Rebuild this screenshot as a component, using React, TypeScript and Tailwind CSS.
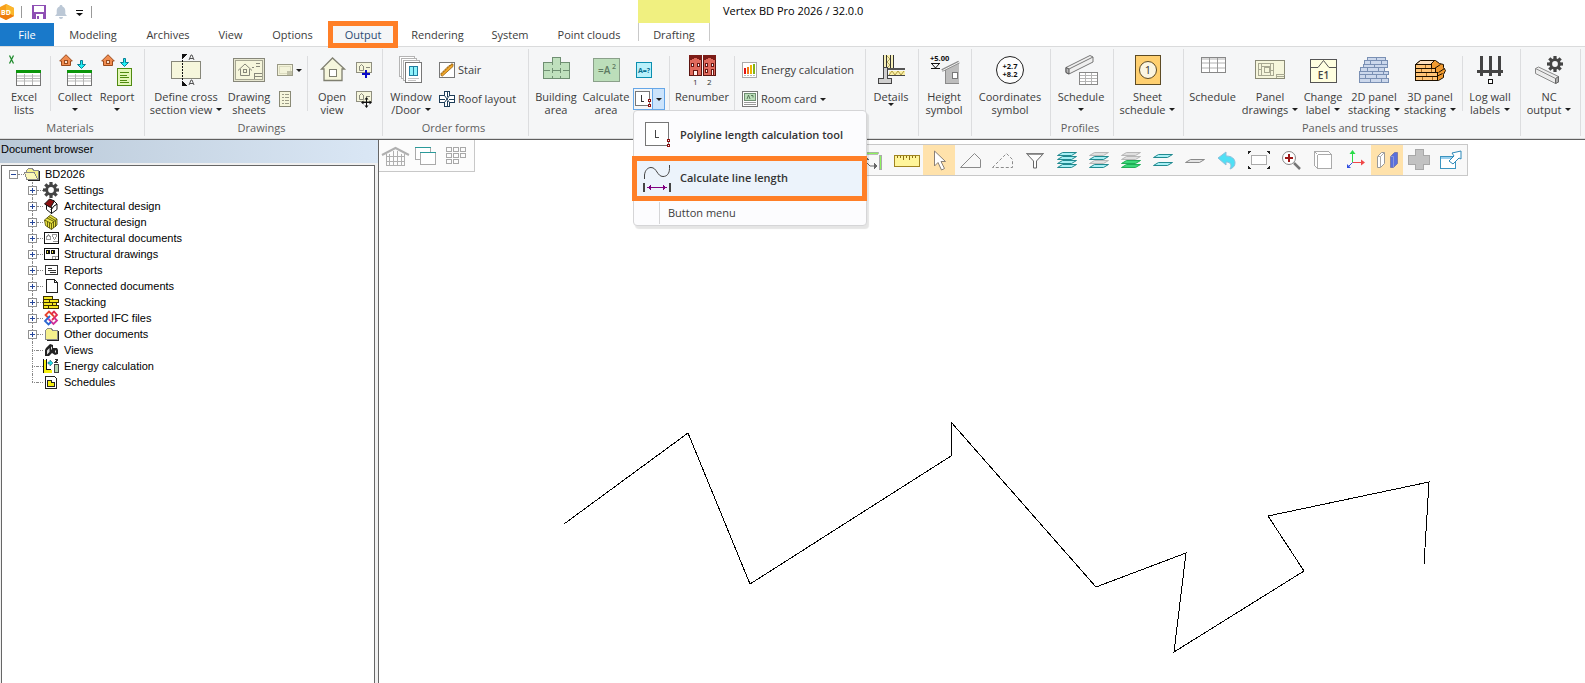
import type { ReactNode } from "react";

const UI_FONT = "font-['Open_Sans','Noto_Sans',sans-serif]";
const TREE_FONT = "font-['Liberation_Sans',Arial,sans-serif]";

function Icon({ w = 32, h = 32, smooth = false, children }: { w?: number; h?: number; smooth?: boolean; children: ReactNode }) {
  return (
    <svg
      width={w}
      height={h}
      viewBox={`0 0 ${w} ${h}`}
      fill="none"
      shapeRendering={smooth ? "auto" : "crispEdges"}
      className="block shrink-0 overflow-visible"
      aria-hidden="true"
    >
      {children}
    </svg>
  );
}

function Caret() {
  return (
    <svg width="6" height="3" viewBox="0 0 6 3" className="inline-block shrink-0" aria-hidden="true">
      <path d="M0 0h6L3 3z" fill="#1e1e1e" />
    </svg>
  );
}

/* ---------- large ribbon icons ---------- */

const House = ({ x = 0, y = 0 }: { x?: number; y?: number }) => (
  <g transform={`translate(${x} ${y})`}>
    <path d="M7 .7L13.3 7H11.500v4.500h-9V7H.7z" fill="#f08c50" stroke="#9a4a1c" shapeRendering="auto" />
    <rect x="5.500" y="6.500" width="3" height="3" fill="#f6e0d0" stroke="#9a4a1c" />
  </g>
);

const DownArrow = ({ x = 0, y = 0 }: { x?: number; y?: number }) => (
  <path
    transform={`translate(${x} ${y})`}
    d="M3.500 .5h2v4h3L4.500 8.500.5 4.500h3z"
    fill="#1ff0f5"
    stroke="#0a7f94"
    shapeRendering="auto"
  />
);

const GreenTable = () => (
  <>
    <rect x="9.500" y="16.500" width="24" height="15" fill="#fff" stroke="#777" />
    <path d="M10 21h23v2H10zM10 26h23v2H10z" fill="#dcdcdc" />
    <path d="M17.500 20v11M25.500 20v11M10 24.500h23" stroke="#b4b4b4" />
    <path d="M9 16h25v3H9z" fill="#0b960b" />
  </>
);

const ExcelIcon = () => (
  <Icon w={34}>
    <path d="M2.500 1.500l4 8M6.500 1.500l-4 8" stroke="#1f8a2c" shapeRendering="auto" strokeWidth="1.300" />
    <GreenTable />
  </Icon>
);

const CollectIcon = () => (
  <Icon w={34}>
    <House x={1} />
    <DownArrow x={19} y={6} />
    <GreenTable />
  </Icon>
);

const ReportIcon = () => (
  <Icon w={34}>
    <House x={1} />
    <DownArrow x={20} y={4} />
    <rect x="17.500" y="14.500" width="14" height="17" fill="#e3f7b8" stroke="#4f8a10" />
    <path d="M20 18.500h9M20 21.500h7M20 23.500h9M20 26.500h7M20 28.500h9" stroke="#4f8a10" />
  </Icon>
);

const SectionIcon = () => (
  <Icon>
    <rect x="1.500" y="7.500" width="29" height="17" fill="#f6f6dc" stroke="#87877a" />
    <path d="M12.500 0v32" stroke="#111" strokeDasharray="2 1" />
    <path d="M12 0h5l-5 5zM12 27v5h5z" fill="#111" />
    <path d="M19 6l2-5h1l2 5M20 4.500h3M19 31l2-5h1l2 5M20 29.500h3" stroke="#555" shapeRendering="auto" />
  </Icon>
);

const SheetsIcon = () => (
  <Icon>
    <rect x=".5" y="4.500" width="31" height="23" fill="#e6e6d0" stroke="#87877a" />
    <rect x="2.500" y="6.500" width="27" height="19" fill="#f6f6dc" stroke="#a5a592" />
    <path d="M5 16.500l7-6.500 7 6.500M7.500 15v6.500h9V15" stroke="#87877a" shapeRendering="auto" />
    <rect x="10.500" y="15.500" width="3" height="3" stroke="#87877a" />
    <path d="M21.500 25v-5.500H29M22 22.500h7M19 13.500h2M23 9.500h4M23 12.500h4" stroke="#87877a" />
  </Icon>
);

const OpenViewIcon = () => (
  <Icon>
    <path d="M16.500 4L5.500 15H8v11.500h18V15h2.500z" fill="#f6f6dc" stroke="#7f7f70" strokeWidth="1.300" shapeRendering="auto" />
    <rect x="13.500" y="15.500" width="7" height="7" fill="#fff" stroke="#7f7f70" />
  </Icon>
);

const WindowIcon = () => (
  <Icon>
    <rect x="4.500" y="2.500" width="15" height="20" fill="#fff" stroke="#b4b4b4" />
    <rect x="6.500" y="4.500" width="15" height="20" fill="#fff" stroke="#b4b4b4" />
    <rect x="8.500" y="6.500" width="16" height="20" fill="#fff" stroke="#b4b4b4" />
    <rect x="10.500" y="8.500" width="16" height="20" fill="#fff" stroke="#777" />
    <rect x="14.500" y="12.500" width="8" height="9" fill="#8ff3fb" stroke="#1f7ea0" />
    <path d="M18.500 12v10" stroke="#1f7ea0" />
    <path d="M13 24.500h11M13 26.500h8" stroke="#c4c4c4" />
  </Icon>
);

const BuildingAreaIcon = () => (
  <Icon>
    <path d="M3.500 8.500h9v-5h8v5h9v16h-26z" fill="#bfe0bd" stroke="#6f8f72" />
    <path d="M12.500 8v3M20.500 8v3M4 16.500h6M13 16.500h7M23 16.500h6M12.500 14v5M20.500 14v5M12.500 22v3M20.500 22v3" stroke="#6f8f72" />
  </Icon>
);

const CalculateAreaIcon = () => (
  <Icon>
    <rect x="3.500" y="4.500" width="26" height="23" fill="#bcdeba" stroke="#8aa08a" />
    <text x="8" y="20" fontSize="10" fontWeight="600" fill="#5f7a62" fontFamily="Open Sans">=A</text>
    <text x="22" y="15" fontSize="7" fontWeight="600" fill="#5f7a62" fontFamily="Open Sans">2</text>
  </Icon>
);

const RowHouse = ({ x, doorLeft }: { x: number; doorLeft?: boolean }) => (
  <g transform={`translate(${x} 1)`}>
    <rect x=".5" y=".5" width="12" height="20" fill="#e06a5c" stroke="#5a1410" />
    <path d="M0 0h13v5h-3V4H8V3H5v1H3v1H0z" fill="#7c1c17" />
    <path d="M2.500 8.500h2v3h-2zM8.500 8.500h2v3h-2z" fill="#dff6ff" stroke="#6b1712" />
    {doorLeft ? (
      <path d="M4.500 15.500h4v5h-4z" fill="#fff2ee" stroke="#6b1712" />
    ) : (
      <path d="M2.500 14.500h2v3h-2zM8.500 14.500h2v6h-2z" fill="#fff2ee" stroke="#6b1712" />
    )}
  </g>
);

const RenumberIcon = () => (
  <Icon>
    <RowHouse x={3} doorLeft />
    <RowHouse x={17} />
    <text x="7" y="31" fontSize="8" fill="#333" fontFamily="Open Sans">1</text>
    <text x="21" y="31" fontSize="8" fill="#333" fontFamily="Open Sans">2</text>
  </Icon>
);

const DetailsIcon = () => (
  <Icon>
    <path d="M8 1h10v13H8z" fill="#f7f0b8" />
    <path d="M8.500 1v13M11.500 1v13M15.500 1v13M18.500 1v13" stroke="#333" />
    <path d="M12 2l3 3-3 3 3 3-3 3" stroke="#b8a860" />
    <path d="M8.500 13.500h4v11h4v5h-13v-5h5z" fill="#cfcfcf" stroke="#444" />
    <path d="M13 14h17v2H13z" fill="#555" />
    <path d="M14 17h16v4H14z" fill="#f9f0a8" />
    <path d="M14 21l3-4 3 4 3-4 3 4 3-4" stroke="#b09a40" shapeRendering="auto" />
    <path d="M13 21.500h17" stroke="#444" />
  </Icon>
);

const HeightIcon = () => (
  <Icon>
    <text x="2" y="7" fontSize="7.500" fontWeight="700" fill="#111" fontFamily="Open Sans">+5.00</text>
    <path d="M3 9.500h9M3 14.500h9" stroke="#111" />
    <path d="M4 10l3.500 4L11 10" stroke="#111" shapeRendering="auto" />
    <path d="M17 15l14-7v22H17z" fill="#bdbdbd" />
    <path d="M17.500 16v13.500H31" stroke="#8a8a8a" />
    <path d="M14 16.500L31 8" stroke="#8a8a8a" strokeWidth="3" shapeRendering="auto" />
    <path d="M14.500 16.500L31 8.200" stroke="#ededed" shapeRendering="auto" />
    <rect x="24.500" y="18.500" width="5" height="6" fill="#fff" stroke="#777" />
  </Icon>
);

const CoordinatesIcon = () => (
  <Icon smooth>
    <circle cx="16" cy="16" r="13.500" fill="#fdfdfd" stroke="#222" />
    <text x="16" y="15" fontSize="7.500" fontWeight="700" textAnchor="middle" fill="#111" fontFamily="Open Sans">+2.7</text>
    <text x="16" y="23" fontSize="7.500" fontWeight="700" textAnchor="middle" fill="#111" fontFamily="Open Sans">+8.2</text>
  </Icon>
);

const BeamTableIcon = () => (
  <Icon>
    <g shapeRendering="auto">
      <path d="M1 13.500L25 1.500l3 1.500v5L4 20l-3-1.500z" fill="#efefef" stroke="#777" />
      <path d="M1 13.500L4 15v5l-3-1.500z" fill="#b8b8b8" stroke="#555" />
      <path d="M4 15L28 3" stroke="#777" />
    </g>
    <rect x="14.500" y="18.500" width="18" height="12" fill="#fff" stroke="#888" />
    <path d="M20.500 19v11M26.500 19v11M15 21.500h17M15 24.500h17M15 27.500h17" stroke="#b4b4b4" />
  </Icon>
);

const SheetScheduleIcon = () => (
  <Icon>
    <rect x="3.500" y="1.500" width="25" height="29" fill="#ffd071" stroke="#5d4b25" />
    <circle cx="16" cy="16" r="8.500" fill="#fbf5e2" stroke="#5d4b25" shapeRendering="auto" />
    <text x="16" y="20" fontSize="11" textAnchor="middle" fill="#333" fontFamily="Open Sans">1</text>
  </Icon>
);

const TableIcon = () => (
  <Icon>
    <rect x="4.500" y="3.500" width="24" height="15" fill="#fff" stroke="#888" />
    <path d="M5 4h23v2H5zM5 8h23v2H5zM5 13h23v2H5z" fill="#d8d8d8" />
    <path d="M12.500 4v14M20.500 4v14" stroke="#999" />
  </Icon>
);

const PanelIcon = () => (
  <Icon>
    <rect x="1.500" y="6.500" width="29" height="18" fill="#f6f6dc" stroke="#8a8a76" />
    <path d="M4.500 9.500h15v12h-15zM7.500 10v11M10.500 13.500h5v5h-5zM16.500 10v11M5 15.500h2M8 12.500h8M17 16.500h2M22.500 24v-3.500h8M23 22.500h7" stroke="#a8a892" />
  </Icon>
);

const ChangeLabelIcon = () => (
  <Icon>
    <rect x="3.500" y="5.500" width="26" height="23" fill="#ffffe0" stroke="#555" />
    <path d="M4 13.500h7l5.500-7 5.500 7h7" stroke="#555" shapeRendering="auto" />
    <text x="16.500" y="25" fontSize="10" fontWeight="600" textAnchor="middle" fill="#444" fontFamily="Open Sans">E1</text>
  </Icon>
);

const Stack2DIcon = () => (
  <Icon>
    <g fill="#ccd8ec" stroke="#7a90b4">
      <path d="M9.500 3.500h18v3h-18zM6.500 6.500h23v4h-23zM5.500 10.500h24v3h-24zM2.500 13.500h24v4h-24zM1.500 17.500h29v3h-29zM1.500 20.500h27v4h-27zM1.500 24.500h29v4h-29z" />
      <path d="M18.500 3v3M12.500 6v4M23.500 6v4M16.500 10v3M9.500 13v4M20.500 13v4M14.500 17v3M25.500 17v3M7.500 20v4M18.500 20v4M12.500 24v4M23.500 24v4" />
    </g>
  </Icon>
);

const Stack3DIcon = () => (
  <Icon>
    <g stroke="#1c1000">
      <path d="M1.500 10.500l5-4h15l4 3 4 1v3l2 3-2 4v3l-5 3h-23z" fill="#f09a30" shapeRendering="auto" />
      <path d="M1.500 10.500l5-4h14l-4 4z" fill="#fce0c0" shapeRendering="auto" />
      <path d="M16.500 10.500l4-4M20.500 14.500l6-4M24.500 18.500l6-4M22.500 22.500l6-3" shapeRendering="auto" />
      <path d="M1.500 10.500h16v4h-16zM1.500 14.500h20v4h-20zM1.500 18.500h22v4h-22zM1.500 22.500h22v4h-22z" fill="#ffc477" />
    </g>
    <path d="M11.500 11v3M7.500 15v3M17.500 15v3M12.500 19v3M8.500 23v3M18.500 23v3" stroke="#a86a1c" />
  </Icon>
);

const LogWallIcon = () => (
  <Icon>
    <path d="M6 2h3v20H6zM15 2h3v20h-3zM24 2h3v20h-3z" fill="#444" />
    <path d="M3 16h26v3H3z" fill="#444" />
    <rect x="14.500" y="25.500" width="4" height="4" rx="1" fill="#fff" stroke="#111" />
  </Icon>
);

const Gear = ({ cx, cy, r, hole = "#fff" }: { cx: number; cy: number; r: number; hole?: string }) => (
  <g shapeRendering="auto" transform={`translate(${cx} ${cy})`}>
    {[0, 45, 90, 135].map((a) => (
      <rect key={a} x={-r / 5} y={-r} width={(r * 2) / 5} height={r * 2} fill="#444" transform={`rotate(${a})`} />
    ))}
    <circle r={r * 0.72} fill="#444" />
    <circle r={r * 0.36} fill={hole} />
  </g>
);

const NcIcon = () => (
  <Icon>
    <Gear cx={22} cy={10} r={8} hole="#f5f6f7" />
    <g shapeRendering="auto" stroke="#8a8a8a">
      <path d="M2.500 14.500l3-1.500 20 9.500v5.500l-3 1.500-20-10z" fill="#ececec" />
      <path d="M2.500 14.500l20 10" />
      <path d="M22.500 24.500l3-2V28l-3 1.500z" fill="#aaa" stroke="#666" />
    </g>
  </Icon>
);

/* ---------- small ribbon icons ---------- */

const MiniSheetIcon = () => (
  <Icon w={16} h={16}>
    <rect x=".5" y="2.500" width="15" height="11" fill="#f3f3da" stroke="#9a9a86" />
    <rect x="2.500" y="4.500" width="11" height="7" stroke="#dcdcc0" />
    <path d="M10 9h5v4h-5z" fill="#c0c0a8" />
  </Icon>
);

const MiniListIcon = () => (
  <Icon w={16} h={16}>
    <rect x="2.500" y=".5" width="11" height="15" fill="#f6f6dc" stroke="#8a8a76" />
    <path d="M5 3.500h2M8 3.500h4M5 6.500h2M8 6.500h4M5 9.500h2M8 9.500h4M5 12.500h2M8 12.500h4" stroke="#9c9c88" />
  </Icon>
);

const MiniView = () => (
  <>
    <rect x=".5" y=".5" width="15" height="10" fill="#f6f6dc" stroke="#8f8f80" />
    <path d="M3 5l2.500-2.500L8 5M3.500 5v3.500h4V5M10 5.500h4" stroke="#8a8a7c" shapeRendering="auto" />
  </>
);

const ViewAddIcon = () => (
  <Icon w={16} h={16}>
    <MiniView />
    <path d="M9 8v8h2V8zM6 11v2h8v-2z" fill="#0a0ac8" />
  </Icon>
);

const ViewMoveIcon = () => (
  <Icon w={16} h={16}>
    <MiniView />
    <path d="M10.500 8v7M7 11.500h7" stroke="#111" />
    <path d="M10.500 6l2 2.500h-4zM10.500 17l2-2.500h-4zM5 11.500l2.500-2v4zM16 11.500l-2.500-2v4z" fill="#111" shapeRendering="auto" />
  </Icon>
);

const StairIcon = () => (
  <Icon w={16} h={16}>
    <rect x=".5" y=".5" width="15" height="15" fill="#fff" stroke="#777" />
    <path
      d="M2 13.500v-2.500h2V9h2V7h2V5h2V3.500h2V2h2v2.500L3.500 14z"
      fill="#f4a92c"
      stroke="#96600c"
      strokeWidth=".8"
      shapeRendering="auto"
    />
  </Icon>
);

const RoofIcon = () => (
  <Icon w={16} h={16}>
    <path d="M5.500.5h5v4h5v7h-5v4h-5v-4h-5v-7h5z" fill="#fff" stroke="#1d3d58" />
    <path d="M8 1v5M8 10v5M1 8h5M10 8h5" stroke="#1d3d58" />
    <path d="M5.500 4.500l5 7M10.500 4.500l-5 7" stroke="#1d3d58" shapeRendering="auto" />
  </Icon>
);

const AskAreaIcon = () => (
  <Icon w={16} h={16}>
    <rect x=".5" y=".5" width="15" height="15" fill="#b9f1fb" stroke="#0a8fb0" />
    <text x="8" y="11" fontSize="7" fontWeight="700" textAnchor="middle" fill="#0a6f90" fontFamily="Open Sans">A=?</text>
  </Icon>
);

const PolylineMiniIcon = () => (
  <Icon w={16} h={16}>
    <rect x=".5" y=".5" width="14" height="14" fill="#fff" stroke="#777" />
    <path d="M6.500 4v6H9" stroke="#333" />
    <path d="M13.500 8.500h2v2h-2zM13.500 13.500h2v2h-2z" fill="#fff" stroke="#8b0f0f" />
  </Icon>
);

const EnergyIcon = () => (
  <Icon w={16} h={16}>
    <rect x=".5" y=".5" width="14" height="15" fill="#fff" stroke="#aaa" />
    <path d="M2 6h2v6H2z" fill="#e41414" />
    <path d="M5 5h2v7H5z" fill="#f07814" />
    <path d="M8 3h2v9H8z" fill="#f0b400" />
    <path d="M11 2h2v10h-2z" fill="#82b414" />
    <path d="M2 13.500h11" stroke="#bbb" strokeDasharray="2 1" />
  </Icon>
);

const RoomCardIcon = () => (
  <Icon w={16} h={16}>
    <rect x=".5" y=".5" width="15" height="15" fill="#fff" stroke="#777" />
    <rect x="2.500" y="2.500" width="11" height="7" fill="#bcdeba" stroke="#6f8f72" />
    <path d="M5 8l1.500-4L8 8M9 4.500h2v2" stroke="#4f6f52" strokeWidth=".9" shapeRendering="auto" />
    <path d="M2 11.500h12M2 13.500h12" stroke="#999" />
  </Icon>
);

/* ---------- ribbon building blocks ---------- */

function BigButton({ icon, lines, caret, width }: { icon: ReactNode; lines: string[]; caret?: "inline" | "below" | "tight"; width: string }) {
  return (
    <button type="button" className={`flex shrink-0 flex-col items-center ${width}`}>
      {icon}
      <span className="mt-1 flex flex-col items-center whitespace-nowrap leading-[13px]">
        {lines.map((line, i) => (
          <span key={line} className="flex items-center gap-1">
            {line}
            {caret === "inline" && i === lines.length - 1 && <Caret />}
          </span>
        ))}
        {caret === "below" && <span className="flex h-3 items-center"><Caret /></span>}
        {caret === "tight" && <span className="flex h-1 items-start"><Caret /></span>}
      </span>
    </button>
  );
}

function SmallButton({ icon, label, caret, name }: { icon: ReactNode; label?: string; caret?: boolean; name?: string }) {
  return (
    <button type="button" aria-label={name} className="flex h-4 items-center gap-[3px] whitespace-nowrap">
      {icon}
      {label}
      {caret && <Caret />}
    </button>
  );
}

const SmallStack = ({ children, className = "" }: { children: ReactNode; className?: string }) => (
  <div className={`flex shrink-0 flex-col gap-[13px] pt-2 ${className}`}>{children}</div>
);

const Divider = ({ className = "" }: { className?: string }) => (
  <div className={`mt-0.5 h-[55px] w-px shrink-0 bg-[#dcdddf] ${className}`} />
);

function Group({ title, width, children }: { title?: string; width: string; children: ReactNode }) {
  return (
    <section className={`flex shrink-0 flex-col border-r border-[#dcdddf] pt-[5px] ${width}`}>
      <div className="flex h-[67px]">{children}</div>
      <div className="pr-1 text-center leading-[16px] text-[#5e5e5e]">{title}</div>
    </section>
  );
}

const PolylineIcon = () => (
  <Icon w={28} h={28}>
    <rect x="1.500" y="1.500" width="23" height="23" fill="#fff" stroke="#777" />
    <path d="M11.500 9v7H15" stroke="#444" />
    <path d="M23.500 18.500h2v2h-2zM23.500 23.500h2v2h-2z" fill="#fff" stroke="#8b0f0f" />
  </Icon>
);

const LineLengthIcon = () => (
  <Icon w={28} h={28}>
    <path d="M1.500 14v-4C2 5 5 2.500 8 2.500c6 0 6 9 12 9 4 0 6.500-3 6.500-8V0" stroke="#444" shapeRendering="auto" />
    <path d="M0 18h2v9H0zM26 18h2v9h-2z" fill="#444" />
    <path d="M5 22.500h18" stroke="#800080" />
    <path d="M4 22.500l4-2.500v5zM24 22.500L20 20v5z" fill="#800080" />
  </Icon>
);

function LengthMenu() {
  return (
    <div className="w-[234px] rounded-sm border border-[#d5d5d7] bg-[#fcfcfe] shadow-[2px_3px_1px_rgba(0,0,0,0.1)]">
      <button type="button" className="flex h-[45px] w-full items-center gap-2 pl-[10px] pt-[3px] font-semibold text-[#333]">
        <PolylineIcon />
        Polyline length calculation tool
      </button>
      <button
        type="button"
        className="-mx-[2px] flex h-[45px] w-[235px] items-center gap-[9px] border-[5px] border-[#ff7f27] bg-[#ecf3fb] pl-[6px] font-semibold text-[#333]"
      >
        <LineLengthIcon />
        Calculate line length
      </button>
      <button type="button" className="flex h-6 w-full items-center">
        <span className="h-[22px] w-[26px] border-r border-[#d5d5d7]" />
        <span className="pl-2">Button menu</span>
      </button>
    </div>
  );
}

function Ribbon() {
  return (
    <div className="flex h-[93px] border-y border-[#dadbdc] bg-[#f5f6f7] py-[2px]">
      <Group title="Materials" width="w-[145px]">
        <BigButton width="w-[48px]" icon={<ExcelIcon />} lines={["Excel", "lists"]} />
        <Divider className="ml-[2px] mr-[3px]" />
        <BigButton width="w-[42px]" icon={<CollectIcon />} lines={["Collect"]} caret="below" />
        <BigButton width="w-[42px]" icon={<ReportIcon />} lines={["Report"]} caret="below" />
      </Group>
      <Group title="Drawings" width="w-[238px]">
        <BigButton width="w-[82px]" icon={<SectionIcon />} lines={["Define cross", "section view"]} caret="inline" />
        <BigButton width="w-[44px]" icon={<SheetsIcon />} lines={["Drawing", "sheets"]} />
        <SmallStack className="w-[36px] pl-[6px]">
          <SmallButton icon={<MiniSheetIcon />} caret name="Sheet layout" />
          <SmallButton icon={<MiniListIcon />} name="Sheet list" />
        </SmallStack>
        <Divider />
        <BigButton width="w-[48px]" icon={<OpenViewIcon />} lines={["Open", "view"]} />
        <SmallStack>
          <SmallButton icon={<ViewAddIcon />} name="Add view" />
          <SmallButton icon={<ViewMoveIcon />} name="Move view" />
        </SmallStack>
      </Group>
      <Group title="Order forms" width="w-[146px]">
        <BigButton width="w-[56px]" icon={<WindowIcon />} lines={["Window", "/Door"]} caret="inline" />
        <SmallStack>
          <SmallButton icon={<StairIcon />} label="Stair" />
          <SmallButton icon={<RoofIcon />} label="Roof layout" />
        </SmallStack>
      </Group>
      <Group width="w-[337px]">
        <BigButton width="w-[54px]" icon={<BuildingAreaIcon />} lines={["Building", "area"]} />
        <BigButton width="w-[46px]" icon={<CalculateAreaIcon />} lines={["Calculate", "area"]} />
        <div className="flex w-[40px] shrink-0 flex-col pl-1 pt-2">
          <span className="pl-[3px]"><SmallButton icon={<AskAreaIcon />} name="Query area" /></span>
          <div className="relative mt-[10px] flex h-[22px] w-8 border border-[#66a7e8]">
            <button type="button" aria-label="Polyline length" className="flex w-[18px] items-center justify-center">
              <PolylineMiniIcon />
            </button>
            <button type="button" aria-label="Length tools" aria-expanded="true" className="flex flex-1 items-center justify-center border-l border-[#66a7e8] bg-[#cce4fc]">
              <Caret />
            </button>
            <div className="absolute -left-px top-full z-20 pt-px">
              <LengthMenu />
            </div>
          </div>
        </div>
        <Divider />
        <BigButton width="w-[64px]" icon={<RenumberIcon />} lines={["Renumber"]} />
        <Divider />
        <SmallStack className="pl-[7px]">
          <SmallButton icon={<EnergyIcon />} label="Energy calculation" />
          <SmallButton icon={<RoomCardIcon />} label="Room card" caret />
        </SmallStack>
      </Group>
      <Group width="w-[53px]">
        <BigButton width="w-[50px]" icon={<DetailsIcon />} lines={["Details"]} caret="tight" />
      </Group>
      <Group width="w-[53px]">
        <BigButton width="w-[50px]" icon={<HeightIcon />} lines={["Height", "symbol"]} />
      </Group>
      <Group width="w-[79px]">
        <BigButton width="w-[76px]" icon={<CoordinatesIcon />} lines={["Coordinates", "symbol"]} />
      </Group>
      <Group title="Profiles" width="w-[63px]">
        <BigButton width="w-[60px]" icon={<BeamTableIcon />} lines={["Schedule"]} caret="below" />
      </Group>
      <Group width="w-[70px]">
        <BigButton width="w-[67px]" icon={<SheetScheduleIcon />} lines={["Sheet", "schedule"]} caret="inline" />
      </Group>
      <Group title="Panels and trusses" width="w-[337px]">
        <BigButton width="w-[57px]" icon={<TableIcon />} lines={["Schedule"]} />
        <BigButton width="w-[58px]" icon={<PanelIcon />} lines={["Panel", "drawings"]} caret="inline" />
        <BigButton width="w-[48px]" icon={<ChangeLabelIcon />} lines={["Change", "label"]} caret="inline" />
        <BigButton width="w-[54px]" icon={<Stack2DIcon />} lines={["2D panel", "stacking"]} caret="inline" />
        <BigButton width="w-[58px]" icon={<Stack3DIcon />} lines={["3D panel", "stacking"]} caret="inline" />
        <Divider className="ml-[3px]" />
        <BigButton width="w-[54px]" icon={<LogWallIcon />} lines={["Log wall", "labels"]} caret="inline" />
      </Group>
      <Group width="w-[60px]">
        <BigButton width="w-[56px]" icon={<NcIcon />} lines={["NC", "output"]} caret="inline" />
      </Group>
    </div>
  );
}

/* ---------- title bar and tabs ---------- */

function TitleBar() {
  return (
    <header className="flex h-[23px] items-center bg-white text-black">
      <Icon w={14} h={16} smooth>
        <path d="M6 0l8 4v8l-8 4-8-4V4z" fill="#f7a01c" />
        <path d="M6 0l8 4v8l-8-4z" fill="#fbb62c" />
        <path d="M-2 12l8-4 8 4-8 4z" fill="#ee7d10" />
        <text x="6" y="11" fontSize="7" fontWeight="700" textAnchor="middle" fill="#fff" fontFamily="Open Sans">BD</text>
      </Icon>
      <div className="ml-[7px] h-3 w-px bg-[#999]" />
      <button type="button" aria-label="Save" className="ml-[10px]">
        <Icon w={14} h={14}>
          <path d="M0 0h14v14H0z" fill="#8e4fb4" />
          <path d="M2 1h10v6H2zM4 9h7v5H4z" fill="#fff" />
          <path d="M5 11h2v3H5z" fill="#8e4fb4" />
        </Icon>
      </button>
      <button type="button" aria-label="Notifications" className="ml-[9px]">
        <Icon w={12} h={14} smooth>
          <path d="M6 0c1 0 1.500.6 1.500 1.500C9.500 2.200 10.300 4 10.300 6v3L12 11H0l1.700-2V6c0-2 .8-3.800 2.800-4.500C4.500.6 5 0 6 0zM4 12h4c0 1.200-.8 2-2 2s-2-.8-2-2z" fill="#bcc8d6" />
        </Icon>
      </button>
      <button type="button" aria-label="Customize toolbar" className="ml-[9px] mt-[3px]">
        <Icon w={7} h={6}>
          <path d="M0 .5h7" stroke="#111" />
          <path d="M0 3h7L3.500 6z" fill="#111" shapeRendering="auto" />
        </Icon>
      </button>
      <div className="ml-2 h-3 w-px bg-[#999]" />
      <div className="ml-[546px] h-full w-[72px] bg-[#f0f080]" />
      <h1 className="ml-[13px] whitespace-nowrap">Vertex BD Pro 2026 / 32.0.0</h1>
    </header>
  );
}

const TABS = [
  { label: "File", cls: "h-[23px] w-[54px] bg-[#1979ca] pt-px text-white" },
  { label: "Modeling", cls: "h-[23px] w-[78px] pt-px" },
  { label: "Archives", cls: "h-[23px] w-[72px] pt-px" },
  { label: "View", cls: "h-[23px] w-[53px] pt-px" },
  { label: "Options", cls: "h-[23px] w-[71px] pt-px" },
  { label: "Output", cls: "relative z-10 -mt-[2px] h-[27px] w-[70px] border-[5px] border-[#ff7f27] bg-[#f5f6f7] pt-px text-[#2b4a72]" },
  { label: "Rendering", cls: "h-[23px] w-[79px] pt-px" },
  { label: "System", cls: "h-[23px] w-[66px] pt-px" },
  { label: "Point clouds", cls: "h-[23px] w-[92px] pt-px" },
  { label: "Drafting", cls: "ml-[3px] h-[18px] w-[72px] border-x border-[#c9c9c9] pt-[6px]" },
];

function Tabs() {
  return (
    <nav className="flex h-[23px] items-start bg-white">
      {TABS.map((t) => (
        <button key={t.label} type="button" className={`flex shrink-0 items-center justify-center whitespace-nowrap ${t.cls}`}>
          {t.label}
        </button>
      ))}
    </nav>
  );
}

/* ---------- document browser ---------- */

const FolderIcon = ({ open = false }: { open?: boolean }) => (
  <Icon w={16} h={16}>
    <path d="M2.500 13.500v-9l2-2h4l1 2h5v9z" fill="#f5f08c" stroke="#8a8a8a" />
    {open && <path d="M3 13.500L.5 6.500h10l3 7z" fill="#fbf7b8" stroke="#8a8a8a" />}
    <path d="M4 14.500h11.500V5" stroke="#222" />
  </Icon>
);

const TREE: { label: string; leaf?: boolean; icon: ReactNode }[] = [
  { label: "Settings", icon: <Gear cx={8} cy={8} r={8} /> },
  {
    label: "Architectural design",
    icon: (
      <g shapeRendering="auto" stroke="#111">
        <path d="M3.500 7v4.500l5 4V9zM8.500 9v6.500l5.500-4V6z" fill="#fff" />
        <path d="M9 9l-1 3 3-4 3-2-4-4" fill="#fff" />
        <path d="M1.500 6l5-5 5 2-4 6.500z" fill="#8b1010" />
      </g>
    ),
  },
  {
    label: "Structural design",
    icon: (
      <g shapeRendering="auto" stroke="#4a4600" strokeWidth=".8">
        <path d="M1.500 6l6-5 6.500 4v6l-5.500 4.500-6-4z" fill="#e8e040" />
        <path d="M1.500 6l7 3.500L14 5M8.500 9.500v6M4 4l7 3.500M5.500 2.500l7 4M4.500 8v5M6.500 9v5M10.500 8v6M12.500 7v6" />
      </g>
    ),
  },
  {
    label: "Architectural documents",
    icon: (
      <>
        <rect x="1.500" y="2.500" width="14" height="11" fill="#fff" stroke="#111" />
        <path d="M3.500 7l2-2 2 2v2.500h-4zM9.500 4.500h4v2l-2 3-2-3zM10 11.500h5" stroke="#999" />
      </>
    ),
  },
  {
    label: "Structural drawings",
    icon: (
      <>
        <rect x="1.500" y="2.500" width="14" height="11" fill="#fff" stroke="#111" />
        <path d="M3 4h4v4H3zM8 4h4v4H8z" fill="#111" />
        <path d="M4 5h1v2H4zM6 5h0M9 5h1v2H9z" fill="#e8e040" />
        <path d="M9.500 13v-2.500H15M12.500 11v2" stroke="#999" />
      </>
    ),
  },
  {
    label: "Reports",
    icon: (
      <>
        <rect x="2.500" y="3.500" width="12" height="9" fill="#fff" stroke="#333" />
        <path d="M5 6.500h4M5 8.500h8M7 10.500h6" stroke="#333" />
      </>
    ),
  },
  { label: "Connected documents", icon: <path d="M3.500 1.500h8l3 3v10h-11zM11.500 1.500v3h3" fill="#fff" stroke="#222" /> },
  {
    label: "Stacking",
    icon: (
      <path
        d="M.5 2.500h9v3h-9zM.5 5.500h15v3H.5zM.5 8.500h13v3H.5zM.5 11.500h15v3H.5zM6.500 6v2M9.500 9v2M5.500 12v2"
        fill="#f5e620"
        stroke="#3a3000"
      />
    ),
  },
  {
    label: "Exported IFC files",
    icon: (
      <g shapeRendering="auto" strokeWidth="1.800">
        <path d="M5 7.500L2.500 5 6 1.500 11 6.500" stroke="#e8442e" />
        <path d="M8.500 4L11 1.500 14 5 9 10" stroke="#e02c50" />
        <path d="M11.500 8L14 10.500 10.500 14 5.500 9" stroke="#d0309a" />
        <path d="M8 12l-2.500 2.500L2 11l5-5" stroke="#2a66d0" />
      </g>
    ),
  },
  { label: "Other documents", icon: <FolderIcon /> },
  {
    label: "Views",
    leaf: true,
    icon: (
      <g shapeRendering="auto">
        <path d="M3 6l4-4 3 1v3l4 0 1 2v4l-3 1-3-2-3 3H2V8z" fill="#222" />
        <path d="M4 8.500l2.500-2.500v4L4 12.500zM8 4.500l1 .5v2l-1 1zM12 8l1 1v2l-1-1z" fill="#ddd" />
      </g>
    ),
  },
  {
    label: "Energy calculation",
    leaf: true,
    icon: (
      <>
        <path d="M0 2h4v10h5v3H0z" fill="#f5ee10" />
        <path d="M.5 1v14M3.500 1v10.500H8" stroke="#111" />
        <path d="M5 4h2V2l3 3-3 3V6H5z" fill="#20e0e8" stroke="#0a5060" strokeWidth=".5" shapeRendering="auto" />
        <rect x="11.500" y="6.500" width="4" height="8" fill="#b8d8b0" stroke="#444" />
        <path d="M12 1.500h2v1l-2 2h3" stroke="#333" />
      </>
    ),
  },
  {
    label: "Schedules",
    leaf: true,
    icon: (
      <>
        <path d="M2.500 2.500h9l2 2v10h-11z" fill="#fff" stroke="#222" />
        <path d="M4.500 6.500h4v2h3v4h-7z" fill="#f5ee10" stroke="#222" />
      </>
    ),
  },
];

const Expander = ({ open = false }: { open?: boolean }) => (
  <Icon w={9} h={9}>
    <rect x=".5" y=".5" width="8" height="8" fill="#fff" stroke="#919191" />
    <path d={open ? "M2 4.500h5" : "M2 4.500h5M4.500 2v5"} stroke="#26479b" />
  </Icon>
);

function DocumentBrowser() {
  return (
    <aside className="flex w-[379px] shrink-0 flex-col border-r border-[#666] bg-[#f0f0f0]">
      <h2 className="h-[23px] bg-linear-to-r from-[#bac9d8] to-[#dae7f5] pl-[1px] leading-[18px] text-black">Document browser</h2>
      <div className="ml-[1px] mr-[3px] mt-[2px] flex-1 border border-b-0 border-[#666] bg-white leading-4 text-black">
        <ul>
          <li>
            <div className="flex h-4 items-center pl-[7px]">
              <Expander open />
              <span className="w-[6px] border-t border-dotted border-[#888]" />
              <FolderIcon open />
              <span className="pl-[5px]">BD2026</span>
            </div>
            <ul>
              {TREE.map((n, i) => (
                <li key={n.label} className="flex h-4 items-center pl-[26px]">
                  <span className="relative flex h-4 w-[9px] items-center">
                    <span className={`absolute left-1 top-0 border-l border-dotted border-[#888] ${i === TREE.length - 1 ? "h-2" : "h-4"}`} />
                    {n.leaf ? (
                      <span className="ml-1 w-[5px] border-t border-dotted border-[#888]" />
                    ) : (
                      <span className="relative"><Expander /></span>
                    )}
                  </span>
                  <span className="w-[6px] border-t border-dotted border-[#888]" />
                  <Icon w={16} h={16}>{n.icon}</Icon>
                  <span className="whitespace-nowrap pl-[5px]">{n.label}</span>
                </li>
              ))}
            </ul>
          </li>
        </ul>
      </div>
    </aside>
  );
}

/* ---------- drawing area ---------- */

const layer = (y: number, fill: string, stroke: string) => (
  <path key={y} d={`M6.500 ${y}.5h14l-5 3h-14z`} fill={fill} stroke={stroke} shapeRendering="auto" />
);
const CYAN = ["#a8f0f5", "#218a90"] as const;
const GREY = ["#e0e0e0", "#b8b8b8"] as const;
const GREEN = ["#3cd878", "#1fae56"] as const;

const VIEW_TOOLS: { name: string; active?: boolean; icon: ReactNode }[] = [
  {
    name: "Rotate view",
    icon: (
      <>
        <path d="M0 3h14v2H0z" fill="#8ef25e" stroke="#aaa" strokeWidth=".8" />
        <path d="M15.500 6.500h2v14h-2z" fill="#8ef25e" stroke="#aaa" />
        <path d="M2 8v5l4 4h5" stroke="#666" shapeRendering="auto" />
        <path d="M10 14l4 3-4 3zM-1 11l3-4 3 4z" fill="#666" />
      </>
    ),
  },
  {
    name: "Measure",
    icon: (
      <>
        <rect x="-1.500" y="6.500" width="25" height="11" fill="#fff59a" stroke="#a08420" />
        <path d="M1.500 7v2M4.500 7v2M7.500 7v4M10.500 7v2M13.500 7v4M16.500 7v2M19.500 7v2" stroke="#8a6f14" />
      </>
    ),
  },
  {
    name: "Select",
    active: true,
    icon: <path d="M6.500 2v15l3.500-3.500 3.500 7.500 3-1.500-3.500-7h4.500z" fill="#fff" stroke="#8a8076" shapeRendering="auto" />,
  },
  { name: "Select polygon", icon: <path d="M.5 18.500L14.500 4.500l6 6v8z" stroke="#8a8a8a" shapeRendering="auto" /> },
  {
    name: "Select open polygon",
    icon: <path d="M.5 18.500L14.500 4.500l6 6v8z" stroke="#8a8a8a" strokeDasharray="3 2" shapeRendering="auto" />,
  },
  {
    name: "Filter",
    icon: (
      <g shapeRendering="auto">
        <path d="M2.500 4.500h17l-7 7.500v7h-3v-7z" fill="#fff" stroke="#666" />
        <path d="M3 4.500h16l-1 1.500H4z" fill="#999" />
      </g>
    ),
  },
  { name: "All layers", icon: [15, 11, 7, 3].map((y) => layer(y, ...CYAN)) },
  { name: "Active layers", icon: <>{layer(15, ...CYAN)}{layer(11, ...GREY)}{layer(7, ...CYAN)}{layer(3, ...GREY)}</> },
  { name: "Bottom layers", icon: <>{layer(15, ...GREEN)}{layer(11, ...GREEN)}{layer(7, ...GREY)}{layer(3, ...GREY)}</> },
  { name: "Two layers", icon: <>{layer(13, ...CYAN)}{layer(5, ...CYAN)}</> },
  { name: "Single layer", icon: layer(10, "#e4e4e4", "#8a8a8a") },
  {
    name: "Undo",
    icon: <path d="M2 9l8-6v4c6 0 9 3 9 7 0 3-2 5-5 6 2-4 1-7-4-7v3z" fill="#4fe0f5" stroke="#8cc0dc" shapeRendering="auto" />,
  },
  {
    name: "Zoom extents",
    icon: (
      <>
        <rect x="3.500" y="6.500" width="15" height="9" fill="#fff" stroke="#aaa" />
        <path d="M.5 5V2.500H3M19 2.500h2.500V5M21.500 17v2.500H19M3 19.500H.5V17" stroke="#222" />
        <path d="M0 2h2v2H0zM20 2h2v2h-2zM20 18h2v2h-2zM0 18h2v2H0z" fill="#222" />
      </>
    ),
  },
  {
    name: "Zoom in",
    icon: (
      <g shapeRendering="auto">
        <path d="M14 14l6 6" stroke="#777" strokeWidth="2.500" />
        <circle cx="9" cy="9" r="6.500" fill="#fff" stroke="#888" />
        <path d="M8 5h2v3h3v2h-3v3H8v-3H5V8h3z" fill="#9c1616" />
      </g>
    ),
  },
  {
    name: "3D box",
    icon: (
      <>
        <path d="M2.500 2.500h14l3 3v14h-14l-3-3z" fill="#fff" stroke="#aaa" />
        <path d="M5.500 5.500h14M5.500 5.500v14M2.500 2.500l3 3" stroke="#aaa" />
      </>
    ),
  },
  {
    name: "Coordinate axes",
    icon: (
      <g shapeRendering="auto">
        <path d="M8.500 13.500V4" stroke="#28dc46" />
        <path d="M8.500 1l3 4h-6z" fill="#28dc46" />
        <path d="M8.500 13.500H18" stroke="#f04848" />
        <path d="M21 13.500l-4-3v6z" fill="#f04848" />
        <path d="M8.500 13.500L5 17" stroke="#3250e0" />
        <path d="M3 19v-4l4 4z" fill="#3250e0" />
      </g>
    ),
  },
  {
    name: "Panel sides",
    active: true,
    icon: (
      <g shapeRendering="auto">
        <path d="M1.500 7.500l4-4h3v11l-4 4h-3z" fill="#fff" stroke="#999" />
        <path d="M1.500 7.500h3v11M4.500 7.500l4-4" stroke="#aaa" />
        <path d="M14.500 7.500l4-4h3v11l-4 4h-3z" fill="#5a70dc" stroke="#7c7ca8" />
        <path d="M14.500 7.500h3v11" stroke="#8c98d8" />
      </g>
    ),
  },
  { name: "Add", icon: <path d="M7.500.5h8v6h6v9h-6v5h-8v-5h-7v-9h7z" fill="#c2c2c2" stroke="#a8a8a8" /> },
  {
    name: "Open in window",
    icon: (
      <>
        <rect x=".5" y="7.500" width="15" height="12" fill="#fff" stroke="#3c94c0" />
        <path d="M1 8h14v2H1z" fill="#9ad0ee" />
        <path d="M9 12l5-5-2-3 9-2v8l-2-1-6 6z" fill="#fff" stroke="#2c88b8" shapeRendering="auto" />
      </>
    ),
  },
];

const HOUSE_TOOLS: { name: string; icon: ReactNode }[] = [
  {
    name: "Building",
    icon: (
      <g stroke="#b0b0b0">
        <path d="M-2 10L11.500 3 25 10" strokeWidth="2" shapeRendering="auto" />
        <path d="M2.500 9v11.500h18V9M5.500 9v11M9.500 6v14M13.500 6v14M17.500 9v11M3 11.500h17M3 16.500h17" />
      </g>
    ),
  },
  {
    name: "Windows",
    icon: (
      <>
        <rect x=".5" y="2.500" width="15" height="12" fill="#fff" stroke="#aaa" />
        <path d="M0 2h16v1H0z" fill="#2a9a9a" />
        <rect x="5.500" y="7.500" width="15" height="12" fill="#fff" stroke="#aaa" />
        <path d="M5 7h16v1H5z" fill="#2a9a9a" />
      </>
    ),
  },
  {
    name: "Tiles",
    icon: <path d="M.5 2.500h5v4h-5zM7.500 2.500h5v4h-5zM14.500 2.500h5v4h-5zM.5 8.500h5v4h-5zM7.500 8.500h5v4h-5zM14.500 8.500h5v4h-5zM.5 14.500h5v4h-5zM7.500 14.500h5v4h-5z" stroke="#a8a8a8" />,
  },
];

function DrawingArea() {
  return (
    <main className="relative flex flex-1 items-start bg-white">
      <div className="flex h-8 shrink-0 items-center border-b border-r border-[#c8c8c8] bg-[#fcfcfc] pr-[2px]">
        {HOUSE_TOOLS.map((t) => (
          <button key={t.name} type="button" aria-label={t.name} className="flex h-full w-[31px] items-center justify-center">
            <Icon w={22} h={22}>{t.icon}</Icon>
          </button>
        ))}
      </div>
      <div className="ml-[383px] mt-1 flex h-8 shrink-0 items-center border border-[#c8c8c8] bg-[#f8f8f8]">
        {VIEW_TOOLS.map((t) => (
          <button
            key={t.name}
            type="button"
            aria-label={t.name}
            className={`flex h-full w-8 items-center justify-center ${t.active ? "bg-[#ffe2ab]" : ""}`}
          >
            <Icon w={22} h={22}>{t.icon}</Icon>
          </button>
        ))}
      </div>
      <svg className="pointer-events-none absolute inset-0 h-full w-full" fill="none" shapeRendering="crispEdges" role="img" aria-label="Polyline">
        <polyline
          points="185,384 309,293 371,444 572,316 572,282 717,447 807,413 795,512 925,431 889,376 1050,342 1045,424"
          stroke="#000"
        />
      </svg>
    </main>
  );
}

export default function App() {
  return (
    <div className={`flex min-h-screen flex-col overflow-hidden bg-white text-[11px] text-[#3c3c3c] ${UI_FONT}`}>
      <TitleBar />
      <Tabs />
      <Ribbon />
      <div className={`flex flex-1 border-t border-[#5f5f5f] ${TREE_FONT}`}>
        <DocumentBrowser />
        <DrawingArea />
      </div>
    </div>
  );
}
